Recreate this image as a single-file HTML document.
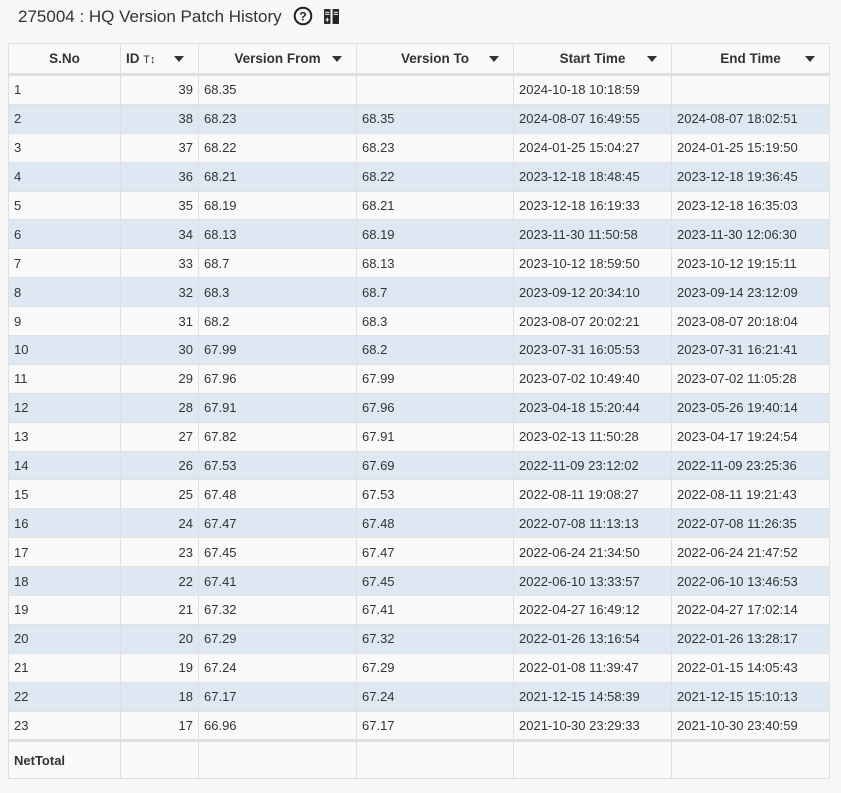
<!DOCTYPE html><html><head><style>
body{margin:0;background:#f7f7f7;font-family:"Liberation Sans",Arial,sans-serif;color:#333;width:841px;height:793px;overflow:hidden}
.title{position:absolute;left:18px;top:6px;font-size:17px;color:#333}
table{position:absolute;left:8px;top:43px;border-collapse:collapse;width:821px;table-layout:fixed;font-size:13px}
td,th{border:1px solid #e0e0e0;padding:0 5px;height:28px;white-space:nowrap;overflow:hidden}
tbody td{height:27.9px}
th{height:29px;font-weight:bold;font-size:13.5px;text-align:center;border-bottom:3px solid #e0e0e0;background:#f9f9f9;position:relative}
th .a{position:absolute;right:14px;top:12px;width:0;height:0;border-left:5px solid transparent;border-right:5px solid transparent;border-top:6px solid #333}
tr:nth-child(odd) td{background:#f9f9f9}
tr:nth-child(even) td{background:#dde8f3}
td.r{text-align:right}
tr.f td{background:#f9f9f9;height:36px;font-weight:bold;border-top:3px solid #e0e0e0}
</style></head><body>
<div class="title">275004 : HQ Version Patch History <svg width="20" height="20" viewBox="0 0 20 20" style="vertical-align:-4px;margin-left:7px"><circle cx="10" cy="10" r="8.3" fill="none" stroke="#222" stroke-width="2"/><text x="10" y="14.5" font-size="12" font-weight="bold" text-anchor="middle" fill="#222" font-family="Liberation Sans">?</text></svg><svg width="17" height="17" viewBox="0 0 16 16" style="vertical-align:-3px;margin-left:10px"><rect x="1" y="1" width="6" height="14" fill="#222"/><rect x="9" y="1" width="6" height="14" fill="#222"/><path d="M2 4h4M2 6h4M10 4h4M10 6h4M4 9v4M2.5 11h3" stroke="#fff" stroke-width="1"/></svg></div>
<table>
<colgroup><col style="width:112px"><col style="width:78px"><col style="width:158px"><col style="width:157px"><col style="width:158px"><col style="width:158px"></colgroup>
<thead><tr><th>S.No</th><th style="text-align:left">ID <span style="font-weight:normal;font-size:11px">T↕</span><span class="a"></span></th><th>Version From<span class="a"></span></th><th>Version To<span class="a"></span></th><th>Start Time<span class="a"></span></th><th>End Time<span class="a"></span></th></tr></thead>
<tbody>
<tr><td>1</td><td class="r">39</td><td>68.35</td><td></td><td>2024-10-18 10:18:59</td><td></td></tr>
<tr><td>2</td><td class="r">38</td><td>68.23</td><td>68.35</td><td>2024-08-07 16:49:55</td><td>2024-08-07 18:02:51</td></tr>
<tr><td>3</td><td class="r">37</td><td>68.22</td><td>68.23</td><td>2024-01-25 15:04:27</td><td>2024-01-25 15:19:50</td></tr>
<tr><td>4</td><td class="r">36</td><td>68.21</td><td>68.22</td><td>2023-12-18 18:48:45</td><td>2023-12-18 19:36:45</td></tr>
<tr><td>5</td><td class="r">35</td><td>68.19</td><td>68.21</td><td>2023-12-18 16:19:33</td><td>2023-12-18 16:35:03</td></tr>
<tr><td>6</td><td class="r">34</td><td>68.13</td><td>68.19</td><td>2023-11-30 11:50:58</td><td>2023-11-30 12:06:30</td></tr>
<tr><td>7</td><td class="r">33</td><td>68.7</td><td>68.13</td><td>2023-10-12 18:59:50</td><td>2023-10-12 19:15:11</td></tr>
<tr><td>8</td><td class="r">32</td><td>68.3</td><td>68.7</td><td>2023-09-12 20:34:10</td><td>2023-09-14 23:12:09</td></tr>
<tr><td>9</td><td class="r">31</td><td>68.2</td><td>68.3</td><td>2023-08-07 20:02:21</td><td>2023-08-07 20:18:04</td></tr>
<tr><td>10</td><td class="r">30</td><td>67.99</td><td>68.2</td><td>2023-07-31 16:05:53</td><td>2023-07-31 16:21:41</td></tr>
<tr><td>11</td><td class="r">29</td><td>67.96</td><td>67.99</td><td>2023-07-02 10:49:40</td><td>2023-07-02 11:05:28</td></tr>
<tr><td>12</td><td class="r">28</td><td>67.91</td><td>67.96</td><td>2023-04-18 15:20:44</td><td>2023-05-26 19:40:14</td></tr>
<tr><td>13</td><td class="r">27</td><td>67.82</td><td>67.91</td><td>2023-02-13 11:50:28</td><td>2023-04-17 19:24:54</td></tr>
<tr><td>14</td><td class="r">26</td><td>67.53</td><td>67.69</td><td>2022-11-09 23:12:02</td><td>2022-11-09 23:25:36</td></tr>
<tr><td>15</td><td class="r">25</td><td>67.48</td><td>67.53</td><td>2022-08-11 19:08:27</td><td>2022-08-11 19:21:43</td></tr>
<tr><td>16</td><td class="r">24</td><td>67.47</td><td>67.48</td><td>2022-07-08 11:13:13</td><td>2022-07-08 11:26:35</td></tr>
<tr><td>17</td><td class="r">23</td><td>67.45</td><td>67.47</td><td>2022-06-24 21:34:50</td><td>2022-06-24 21:47:52</td></tr>
<tr><td>18</td><td class="r">22</td><td>67.41</td><td>67.45</td><td>2022-06-10 13:33:57</td><td>2022-06-10 13:46:53</td></tr>
<tr><td>19</td><td class="r">21</td><td>67.32</td><td>67.41</td><td>2022-04-27 16:49:12</td><td>2022-04-27 17:02:14</td></tr>
<tr><td>20</td><td class="r">20</td><td>67.29</td><td>67.32</td><td>2022-01-26 13:16:54</td><td>2022-01-26 13:28:17</td></tr>
<tr><td>21</td><td class="r">19</td><td>67.24</td><td>67.29</td><td>2022-01-08 11:39:47</td><td>2022-01-15 14:05:43</td></tr>
<tr><td>22</td><td class="r">18</td><td>67.17</td><td>67.24</td><td>2021-12-15 14:58:39</td><td>2021-12-15 15:10:13</td></tr>
<tr><td>23</td><td class="r">17</td><td>66.96</td><td>67.17</td><td>2021-10-30 23:29:33</td><td>2021-10-30 23:40:59</td></tr>
<tr class="f"><td>NetTotal</td><td></td><td></td><td></td><td></td><td></td></tr>
</tbody></table>
</body></html>
